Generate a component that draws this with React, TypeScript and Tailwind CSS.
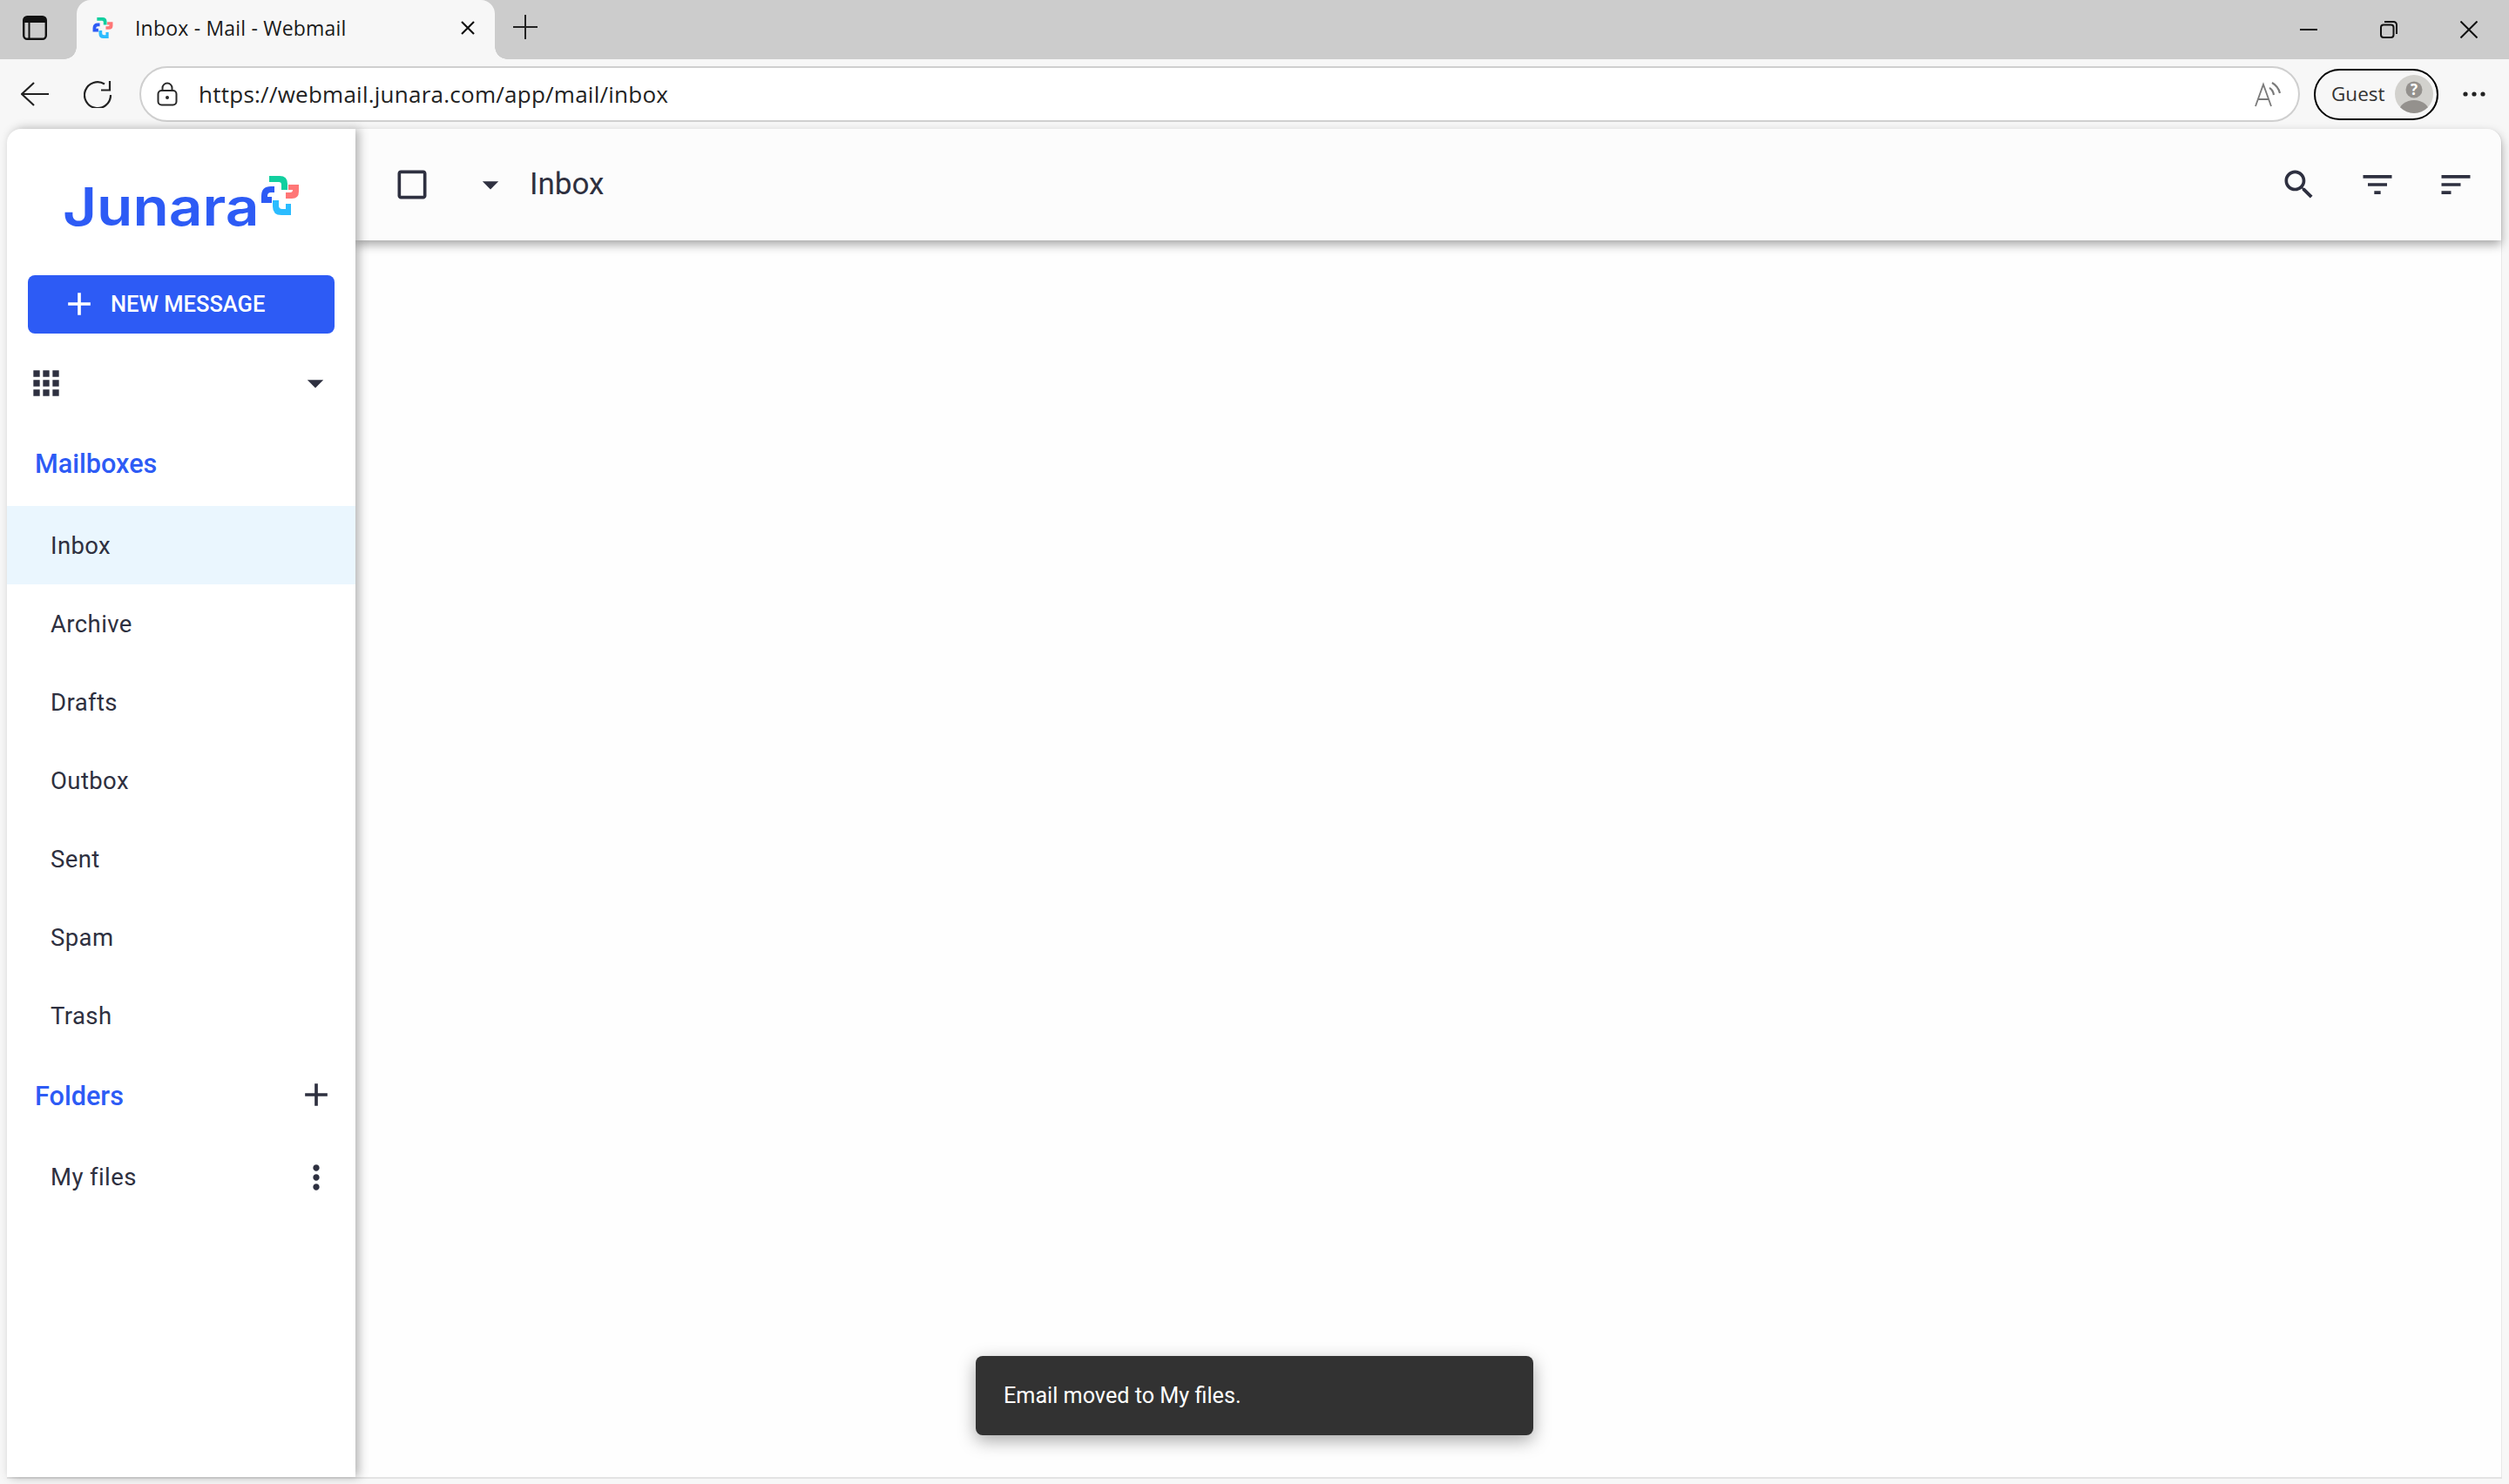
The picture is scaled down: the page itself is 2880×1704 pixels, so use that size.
import React from 'react';

const mailboxes = ['Inbox', 'Archive', 'Drafts', 'Outbox', 'Sent', 'Spam', 'Trash'];

const icons = {
    search: 'M15.5 14h-.79l-.28-.27C15.41 12.59 16 11.11 16 9.5 16 5.91 13.09 3 9.5 3S3 5.91 3 9.5 5.91 16 9.5 16c1.61 0 3.09-.59 4.23-1.57l.27.28v.79l5 4.99L20.49 19l-4.99-5zm-6 0C7.01 14 5 11.99 5 9.5S7.01 5 9.5 5 14 7.01 14 9.5 11.99 14 9.5 14z',
    filter: 'M10 18h4v-2h-4v2zM3 6v2h18V6H3zm3 7h12v-2H6v2z',
    sort: 'M3 18h6v-2H3v2zM3 6v2h18V6H3zm0 7h12v-2H3v2z',
    checkbox: 'M19 5v14H5V5h14m0-2H5c-1.1 0-2 .9-2 2v14c0 1.1.9 2 2 2h14c1.1 0 2-.9 2-2V5c0-1.1-.9-2-2-2z',
    dropdown: 'M7 10l5 5 5-5z',
    apps: 'M4 8h4V4H4v4zm6 12h4v-4h-4v4zm-6 0h4v-4H4v4zm0-6h4v-4H4v4zm6 0h4v-4h-4v4zm6-10v4h4V4h-4zm-6 4h4V4h-4v4zm6 6h4v-4h-4v4zm0 6h4v-4h-4v4z',
    add: 'M19 13h-6v6h-2v-6H5v-2h6V5h2v6h6v2z',
    more: 'M12 8c1.1 0 2-.9 2-2s-.9-2-2-2-2 .9-2 2 .9 2 2 2zm0 2c-1.1 0-2 .9-2 2s.9 2 2 2 2-.9 2-2-.9-2-2-2zm0 6c-1.1 0-2 .9-2 2s.9 2 2 2 2-.9 2-2-.9-2-2-2z',
};

function MatIcon({ d, className = 'text-[#2e3040]' }: { d: string; className?: string }) {
    return (
        <svg viewBox="0 0 24 24" fill="currentColor" className={`w-[44px] h-[44px] shrink-0 ${className}`}>
            <path d={d} />
        </svg>
    );
}

function Cross({ className, viewBox = '0 0 55 55' }: { className: string; viewBox?: string }) {
    return (
        <svg viewBox={viewBox} className={className}>
            <path fill="#12cf9f" d="M14 7H26Q35 7 35 16V23H28V17Q28 14 25 14H14Z" />
            <path fill="#ff7676" d="M36 17H48V25Q48 33 40 33H33V26H38Q41 26 41 23V23H36Z" />
            <path fill="#2bbcff" d="M18 35H25V41Q25 45 29 45H33V39H39V52H28Q18 52 18 42Z" />
            <path fill="#2d5bf5" d="M20 19V26H16Q12 26 12 30V31H17V38H5V30Q5 19 16 19Z" />
        </svg>
    );
}

function TabStrip() {
    return (
        <div className="h-[68px] bg-[#cccccc] flex items-center shrink-0">
            <svg viewBox="0 0 28 28" fill="none" stroke="#111" strokeWidth="2.4" className="w-[28px] h-[28px] ml-[26px] mb-[4px]">
                <rect x="1.2" y="1.2" width="25.6" height="25.6" rx="4" />
                <path d="M1.2 5h25.6" strokeWidth="6" />
                <path d="M7.5 6v20" strokeWidth="2" />
            </svg>
            <div className="relative ml-[34px] w-[480px] h-[68px] bg-[#f7f7f7] rounded-t-[16px] flex items-center pl-[18px] pr-[23px] pb-[4px]">
                <span className="absolute left-[-14px] bottom-0 w-[14px] h-[14px] bg-[radial-gradient(circle_at_0_0,#cccccc_13.5px,#f7f7f7_14px)]" />
                <span className="absolute right-[-14px] bottom-0 w-[14px] h-[14px] bg-[radial-gradient(circle_at_100%_0,#cccccc_13.5px,#f7f7f7_14px)]" />
                <Cross viewBox="5 7 43 45" className="w-[24px] h-[24px] shrink-0" />
                <span className="ml-[25px] flex-1 font-['Open_Sans',sans-serif] text-[23px] text-[#1a1a1a] tracking-[0.2px] whitespace-nowrap">
                    Inbox - Mail - Webmail
                </span>
                <svg viewBox="0 0 16 16" stroke="#111" strokeWidth="2.2" className="w-[16px] h-[16px]">
                    <path d="M1 1l14 14M15 1L1 15" />
                </svg>
            </div>
            <svg viewBox="0 0 28 28" stroke="#222" strokeWidth="2" className="w-[28px] h-[28px] ml-[21px] mb-[6px]">
                <path d="M14 0v28M0 14h28" />
            </svg>
            <div className="flex-1" />
            <div className="flex items-center gap-[72px] pr-[36px]">
                <svg viewBox="0 0 20 20" stroke="#111" strokeWidth="2" className="w-[20px] h-[20px]">
                    <path d="M0 10h20" />
                </svg>
                <svg viewBox="0 0 20 20" fill="none" stroke="#111" strokeWidth="2" className="w-[20px] h-[20px]">
                    <rect x="1" y="4.5" width="14.5" height="14.5" rx="3" />
                    <path d="M5 1h10.5a3.5 3.5 0 0 1 3.5 3.5V15" />
                </svg>
                <svg viewBox="0 0 20 20" stroke="#111" strokeWidth="2" className="w-[20px] h-[20px]">
                    <path d="M0.5 0.5l19 19M19.5 0.5l-19 19" />
                </svg>
            </div>
        </div>
    );
}

function AddressRow() {
    return (
        <div className="h-[80px] bg-[#f7f7f7] flex items-center shrink-0">
            <svg viewBox="0 0 32 28" fill="none" stroke="#222" strokeWidth="2.2" className="w-[32px] h-[28px] ml-[24px]">
                <path d="M32 14H1M15 1L1 14l14 13" />
            </svg>
            <svg viewBox="0 0 32 32" fill="none" stroke="#222" strokeWidth="2.2" className="w-[32px] h-[32px] ml-[40px]">
                <path d="M31 17A15 15 0 1 1 24 4.5" />
                <path d="M30 1v10.5H20" />
            </svg>
            <div className="ml-[32px] flex-1 h-[64px] rounded-full border-2 border-[#cfcfcf] bg-white flex items-center pl-[18px] pr-[20px]">
                <svg viewBox="0 0 24 28" fill="none" stroke="#2a2a2a" strokeWidth="2" className="w-[24px] h-[28px] shrink-0">
                    <rect x="1.5" y="10" width="21" height="16.5" rx="4" />
                    <path d="M6.5 10V7a5.5 5.5 0 0 1 11 0v3" />
                    <circle cx="12" cy="18" r="2" fill="#2a2a2a" stroke="none" />
                </svg>
                <span className="ml-[24px] flex-1 font-['Open_Sans',sans-serif] text-[26px] text-[#222] tracking-[0.25px] whitespace-nowrap">
                    https://webmail.junara.com/app/mail/inbox
                </span>
                <svg viewBox="0 0 30 30" fill="none" stroke="#7a7a7a" strokeWidth="1.8" className="w-[30px] h-[30px] shrink-0">
                    <path d="M1 29L10 4l9 25M4 21h12" />
                    <path d="M17 8q4 2 5 8M20 2q7 4 9 12" strokeWidth="2.2" />
                </svg>
            </div>
            <div className="ml-[16px] w-[143px] h-[59px] rounded-full border-[2.5px] border-black flex items-center pl-[18px] pr-[4px]">
                <span className="flex-1 font-['Open_Sans',sans-serif] text-[22.5px] text-[#333] whitespace-nowrap">Guest</span>
                <svg viewBox="0 0 44 44" className="w-[44px] h-[44px] shrink-0">
                    <clipPath id="avatar-clip">
                        <circle cx="22" cy="22" r="22" />
                    </clipPath>
                    <circle cx="22" cy="22" r="22" fill="#d2d1cd" />
                    <g clipPath="url(#avatar-clip)">
                        <ellipse cx="22" cy="42" rx="17" ry="13" fill="#94918d" />
                    </g>
                    <circle cx="22" cy="17" r="9.5" fill="#94918d" />
                    <text x="22" y="23" textAnchor="middle" fontFamily="Open Sans, sans-serif" fontWeight="700" fontSize="17" fill="#fff">?</text>
                </svg>
            </div>
            <svg viewBox="0 0 26 6" fill="#222" className="w-[26px] h-[6px] ml-[28px] mr-[27px]">
                <circle cx="3" cy="3" r="2.6" />
                <circle cx="13" cy="3" r="2.6" />
                <circle cx="23" cy="3" r="2.6" />
            </svg>
        </div>
    );
}

function Sidebar() {
    return (
        <aside className="relative z-20 w-[400px] shrink-0 bg-white rounded-tl-[16px] shadow-[4px_0_12px_rgba(0,0,0,0.3)] flex flex-col font-['Roboto',sans-serif] text-[#2e3040]">
            <div className="h-[168px] pl-[64px] pt-[47px] flex items-start shrink-0">
                <span className="w-[223px] mt-[12px] font-['Inter',sans-serif] font-semibold text-[60px] leading-[60px] scale-x-[1.125] origin-left text-[#2d5bf5] whitespace-nowrap">
                    Junara
                </span>
                <Cross className="w-[55px] h-[55px] shrink-0" />
            </div>
            <button className="mx-[24px] h-[67px] bg-[#2d5bf5] rounded-[8px] text-white flex items-center pl-[37px] pb-[1px] shrink-0">
                <MatIcon d={icons.add} className="text-white" />
                <span className="ml-[14px] text-[25.5px] font-medium">NEW MESSAGE</span>
            </button>
            <div className="mt-[35px] h-[44px] pl-[23px] pr-[24px] flex items-center justify-between shrink-0">
                <MatIcon d={icons.apps} />
                <MatIcon d={icons.dropdown} />
            </div>
            <div className="mt-[48px] h-[46px] pl-[32px] flex items-center text-[30.6px] font-medium text-[#2d5bf5] shrink-0">Mailboxes</div>
            <div className="mt-[25px] flex flex-col">
                {mailboxes.map((name) => (
                    <div
                        key={name}
                        className={`h-[90px] pl-[50px] pt-[1px] flex items-center text-[27.5px] tracking-[0.4px] ${name === 'Inbox' ? 'bg-[#eaf6fe]' : ''}`}
                    >
                        {name}
                    </div>
                ))}
            </div>
            <div className="mt-[25px] h-[46px] pl-[32px] pr-[23px] flex items-center justify-between text-[30.6px] font-medium text-[#2d5bf5] shrink-0">
                Folders
                <MatIcon d={icons.add} className="text-[#2e3040] mb-[5px]" />
            </div>
            <div className="mt-[25px] h-[90px] pl-[50px] pr-[23px] flex items-center justify-between text-[27.5px] tracking-[0.4px] shrink-0">
                My files
                <MatIcon d={icons.more} />
            </div>
        </aside>
    );
}

function MainPane() {
    return (
        <main className="flex-1 flex flex-col bg-[#fefefe] rounded-tr-[16px] border-r border-[#e8e8e8] font-['Roboto',sans-serif]">
            <div className="relative z-10 h-[128px] bg-[#fcfcfc] rounded-tr-[16px] shadow-[0_5px_12px_rgba(0,0,0,0.35)] flex items-center pl-[43px] pr-[30px] shrink-0">
                <MatIcon d={icons.checkbox} />
                <div className="ml-[46px]">
                    <MatIcon d={icons.dropdown} />
                </div>
                <span className="ml-[23px] pt-[1px] text-[35px] text-[#2e3040]">Inbox</span>
                <div className="flex-1" />
                <div className="flex items-center gap-[46px]">
                    <MatIcon d={icons.search} />
                    <MatIcon d={icons.filter} />
                    <MatIcon d={icons.sort} />
                </div>
            </div>
        </main>
    );
}

export default function App() {
    return (
        <div className="relative w-[2880px] h-[1704px] bg-[#f7f7f7] flex flex-col overflow-hidden">
            <TabStrip />
            <AddressRow />
            <div className="flex-1 mx-[8px] mb-[6px] flex border-b-2 border-[#e3e3e3] rounded-t-[16px]">
                <Sidebar />
                <MainPane />
            </div>
            {/* snackbar */}
            <div className="absolute left-1/2 -translate-x-1/2 bottom-[56px] w-[640px] h-[91px] bg-[#323232] rounded-[8px] shadow-[0_6px_20px_rgba(0,0,0,0.35)] flex items-center pl-[32px] font-['Roboto',sans-serif] text-[25.2px] text-white">
                Email moved to My files.
            </div>
        </div>
    );
}
